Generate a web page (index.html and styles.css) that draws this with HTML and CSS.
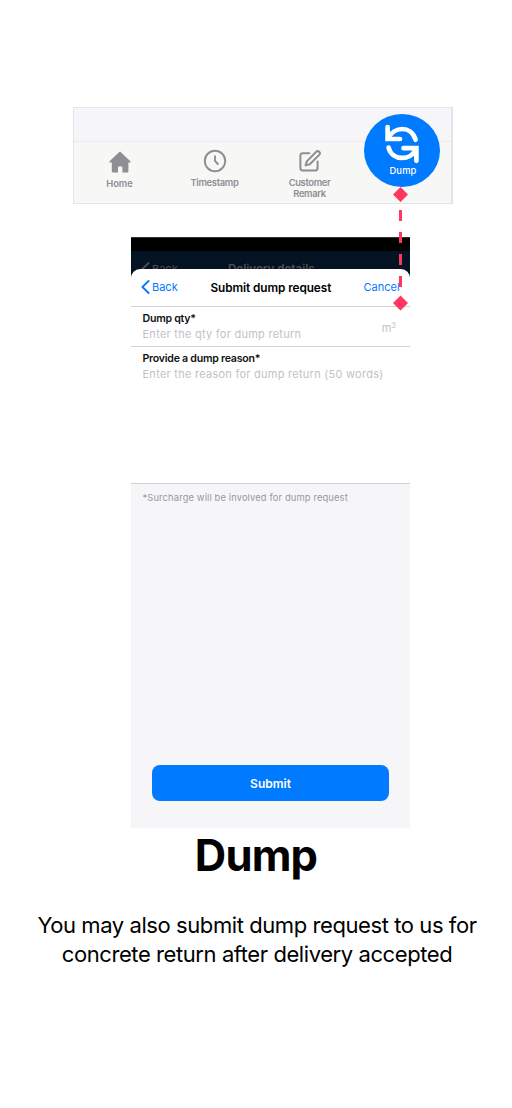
FILE: index.html
```html
<!DOCTYPE html>
<html lang="en">
<head>
<meta charset="utf-8">
<meta name="viewport" content="width=device-width, initial-scale=1">
<title>Dump</title>
<link rel="stylesheet" href="styles.css">
</head>
<body>
<main class="page">
  <section class="tabbar">
    <div class="tabbar-top"></div>
    <nav class="tabs">
      <div class="tab home">
        <svg class="tab-icon" width="24" height="24" viewBox="0 0 24 24"><path d="M12 1.400 22.400 11.200Q23.200 12.400 21.800 12.600H20.400V21.200Q20.400 22.400 19.200 22.400H14.400V17.600Q14.400 16.600 13.400 16.600H11Q10 16.600 10 17.600V22.400H5Q3.800 22.400 3.800 21.200V12.600H2.200Q.8 12.400 1.600 11.200L11.200 2Q12 1.300 12.800 2Z" fill="#8e8e93"/></svg>
        <span class="tab-label">Home</span>
      </div>
      <div class="tab time">
        <svg class="tab-icon" width="24" height="24" viewBox="0 0 24 24" fill="none" stroke="#8e8e93" stroke-width="1.9" stroke-linecap="round" stroke-linejoin="round"><circle cx="12" cy="12" r="10.2"/><path d="M12 7.200V11.800L14.800 15"/></svg>
        <span class="tab-label">Timestamp</span>
      </div>
      <div class="tab remark">
        <svg class="tab-icon" width="24" height="24" viewBox="0 0 24 24" fill="none" stroke="#8e8e93" stroke-width="2" stroke-linejoin="round" stroke-linecap="round"><path d="M11.400 4.300H4.800Q2.400 4.300 2.400 6.700V19Q2.400 21.400 4.800 21.400H17.200Q19.600 21.400 19.600 19V12.600"/><path d="M7.600 16.400 8.800 12.400 18.200 2.800Q19.600 1.400 21.200 2.800 22.700 4.400 21.200 5.900L11.800 15.300Z"/></svg>
        <span class="tab-label">Customer<br>Remark</span>
      </div>
    </nav>
    <div class="dump-button">
      <svg width="38" height="41" viewBox="0 0 38 41" fill="none" stroke="#fff" stroke-width="4.7" stroke-linecap="round"><path d="M4.600 4V16H17M5 15.500C11 3.200 28 2 32.600 16.800"/><path d="M33.400 37.800V25.200H20.500M33 25.800C28 38.200 9 38.200 5.600 24.600"/></svg>
      <span class="dump-label">Dump</span>
    </div>
  </section>

  <section class="phone">
    <div class="status"></div>
    <div class="under">
      <svg class="chevron" width="9" height="14" viewBox="0 0 9 14"><path d="M7.600 1 1.400 7 7.600 13"/></svg>
      <span class="under-back">Back</span>
      <span class="under-title">Delivery details</span>
    </div>
    <div class="sheet">
      <header class="bar">
        <svg class="chevron" width="9" height="14" viewBox="0 0 9 14"><path d="M7.600 1 1.400 7 7.600 13"/></svg>
        <span class="back">Back</span>
        <span class="bar-title">Submit dump request</span>
        <span class="cancel">Cancel</span>
      </header>
      <div class="field qty">
        <div class="field-text">
          <span class="label">Dump qty*</span>
          <span class="hint">Enter the qty for dump return</span>
        </div>
        <span class="unit">m<span class="cube">3</span></span>
      </div>
      <div class="field reason">
        <div class="field-text">
          <span class="label">Provide a dump reason*</span>
          <span class="hint">Enter the reason for dump return (50 words)</span>
        </div>
      </div>
      <div class="rest">
        <span class="note">*Surcharge will be involved for dump request</span>
        <div class="submit">Submit</div>
      </div>
    </div>
  </section>

  <svg class="connector" width="16" height="126" viewBox="0 0 16 126"><path d="M8.500 1 16 8.500 8.500 16 1 8.500Z M8.500 109.500 16 117 8.500 124.500 1 117Z" fill="#ff375f"/><path d="M8.500 24V102" stroke="#ff375f" stroke-width="3" stroke-dasharray="11 11"/></svg>

  <h1 class="title">Dump</h1>
  <p class="copy">You may also submit dump request to us for<br>concrete return after delivery accepted</p>
</main>
</body>
</html>
```
FILE: styles.css
```css
* { box-sizing: border-box; }
body { margin: 0; background: #fff; font-family: Inter, "Liberation Sans", sans-serif; }
.page { position: relative; width: 512px; height: 1108px; padding-top: 107px; overflow: hidden; }

.tabbar { position: relative; width: 380px; height: 97px; margin-left: 73px; border: 2px solid #e4e4ea; border-width: 1.5px 2px 1.5px 1.5px; background: #f7f7f5; }
.tabbar-top { height: 34px; background: #f6f6fa; border-bottom: 1px solid #ececef; }
.tabs { display: flex; margin-left: -2px; }
.tab { width: 95px; display: flex; flex-direction: column; align-items: center; color: #8e8e93; }
.tab-icon { margin-top: 7px; }
.tab-label { font-size: 9.4px; font-weight: 600; line-height: 11px; letter-spacing: -.1px; text-align: center; white-space: nowrap; margin-top: 4px; }
.home .tab-icon { margin-top: 8px; }
.time .tab-label { letter-spacing: -.3px; }
.remark .tab-label { letter-spacing: -.35px; }
.dump-button { position: absolute; left: 290px; top: 5.5px; width: 76px; height: 73px; border-radius: 50%; background: #007aff; color: #fff; display: flex; flex-direction: column; align-items: center; padding-top: 9px; }
.dump-label { font-size: 9.4px; line-height: 12px; letter-spacing: .15px; margin-top: 1px; padding-left: 2px; font-weight: 500; }

.phone { width: 279px; height: 591px; margin: 33px 0 0 131px; background: #031323; display: flex; flex-direction: column; }
.status { height: 14px; background: #000; border-top: 1px solid #333; }
.under { height: 18px; overflow: hidden; display: flex; align-items: flex-start; padding: 11px 0 0 10px; font-size: 11px; line-height: 14px; color: #504f50; }
.chevron { fill: none; stroke: currentColor; stroke-width: 1.8; stroke-linecap: round; stroke-linejoin: round; flex: none; }
.under-back { margin-left: 2px; width: 76px; }
.under-title { font-size: 11.6px; font-weight: 600; }
.sheet { flex: 1; display: flex; flex-direction: column; background: #fff; border-radius: 9px 9px 0 0; overflow: hidden; }
.bar { height: 38px; flex: none; border-bottom: 1px solid #d2d2d4; display: flex; align-items: center; padding: 0 0 1px 10px; color: #007aff; font-size: 11px; white-space: nowrap; }
.back { margin-left: 2px; width: 58.5px; }
.bar-title { color: #000; font-weight: 600; font-size: 11.8px; width: 153px; letter-spacing: -.08px; padding-top: 1px; }
.field { display: flex; justify-content: space-between; padding: 5px 14px 0 11.5px; white-space: nowrap; }
.qty { height: 40px; border-bottom: 1px solid #d2d2d4; }
.reason { height: 137px; border-bottom: 1px solid #d2d2d4; }
.field-text { display: flex; flex-direction: column; }
.label { font-size: 10.6px; line-height: 14px; font-weight: 600; letter-spacing: -.25px; color: #111; }
.hint { font-size: 11px; line-height: 14px; color: #c2c2c4; margin-top: 1px; letter-spacing: .26px; }
.unit { font-size: 11px; color: #c2c2c4; line-height: 14px; padding-top: 9px; }
.cube { font-size: 7.5px; vertical-align: 4px; line-height: 0; }
.rest { flex: 1; background: #f6f6f9; padding: 7px 21px 0 11.5px; display: flex; flex-direction: column; }
.note { font-size: 9.4px; line-height: 13px; letter-spacing: .12px; color: #98989c; white-space: nowrap; }
.submit { width: 237px; height: 36.5px; margin: 260.5px 0 0 9.5px; padding-top: 1px; border-radius: 8px; background: #007aff; color: #fff; font-weight: 600; font-size: 12px; display: flex; align-items: center; justify-content: center; }

.connector { position: absolute; left: 392px; top: 186px; }

.title { margin: 0; width: 512px; text-align: center; font-size: 43.5px; line-height: 54px; font-weight: 700; letter-spacing: -.8px; }
.copy { margin: 29px 0 0; padding-left: 2px; text-align: center; font-size: 22px; line-height: 29px; letter-spacing: -.42px; white-space: nowrap; }
```
